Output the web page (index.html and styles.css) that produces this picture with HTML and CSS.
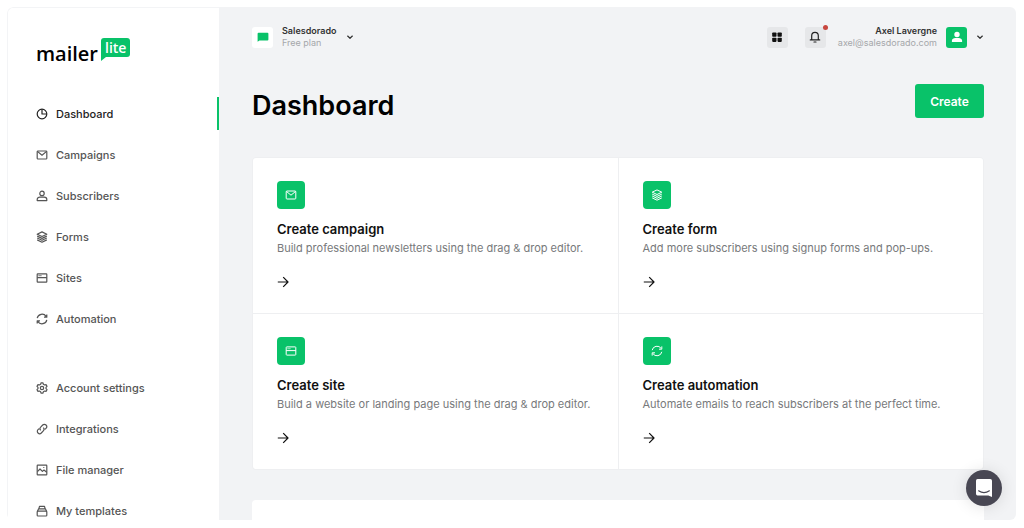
FILE: index.html
```html
<!DOCTYPE html>
<html lang="en">
<head>
<meta charset="utf-8">
<meta name="viewport" content="width=device-width, initial-scale=1">
<title>Dashboard | MailerLite</title>
<link rel="stylesheet" href="styles.css">
</head>
<body>
<svg class="sprite" aria-hidden="true">
  <symbol id="i-pie" viewBox="0 0 12 12"><circle cx="6" cy="6" r="4.8"/><path d="M6 1.2V6h4.8"/></symbol>
  <symbol id="i-mail" viewBox="0 0 12 12"><rect x="1.2" y="2" width="9.6" height="8" rx=".8"/><path d="M1.4 2.4 6 6.2l4.6-3.8"/></symbol>
  <symbol id="i-user" viewBox="0 0 12 12"><circle cx="6" cy="3.4" r="2.2"/><path d="M1.2 10.6V9.4C1.2 8 2.4 7.2 3.8 7.2h4.4c1.4 0 2.6.8 2.6 2.2v1.2z"/></symbol>
  <symbol id="i-layers" viewBox="0 0 12 12"><path d="M6 .9 10.8 3.2 6 5.5 1.2 3.2zM1.2 5.1 6 7.4l4.8-2.3M1.2 7 6 9.3 10.8 7M1.2 8.9 6 11.2l4.8-2.3"/></symbol>
  <symbol id="i-browser" viewBox="0 0 12 12"><rect x="1.2" y="1.9" width="9.6" height="8.2" rx=".6"/><path d="M1.2 5.6h9.6M2.6 3.7h1M4.4 3.7h1"/></symbol>
  <symbol id="i-sync" viewBox="0 0 12 12"><path d="M1.2 5.2A4.9 4.9 0 0 1 10.1 3.4M10.8 6.8A4.9 4.9 0 0 1 1.9 8.6M10.8 1.4v2.8H8M1.2 10.6V7.8H4"/></symbol>
  <symbol id="i-gear" viewBox="0 0 12 12"><path d="M5 .9h2l.4 1.4 1.2.7 1.4-.4 1 1.8-1 1v1.2l1 1-1 1.8-1.4-.4-1.2.7-.4 1.4H5l-.4-1.4-1.2-.7-1.4.4-1-1.8 1-1V5.4l-1-1 1-1.8 1.4.4 1.2-.7z"/><circle cx="6" cy="6" r="1.7"/></symbol>
  <symbol id="i-link" viewBox="0 0 12 12"><path d="M4.700 7.300a2.300 2.300 0 0 1 0-3.200l2-2.100a2.300 2.300 0 0 1 3.300 3.300L8.900 6.400M7.300 4.700a2.300 2.300 0 0 1 0 3.200l-2 2.100A2.300 2.300 0 0 1 2 6.700l1.100-1.100"/></symbol>
  <symbol id="i-image" viewBox="0 0 12 12"><rect x="1.2" y="1.2" width="9.6" height="9.6" rx=".6"/><path d="M1.4 7.600 4 5l2.400 2.400L8 6l2.700 2.200M7.300 3.500h1"/></symbol>
  <symbol id="i-stack" viewBox="0 0 12 12"><rect x="1.2" y="6.2" width="9.6" height="4.800" rx=".8"/><path d="M1.400 6.400 2.600 3.800h6.800l1.200 2.600M2.900 3.600l.6-2.200h5l.6 2.200"/></symbol>
  <symbol id="i-arrow" viewBox="0 0 12 12"><path d="M.8 6h10M6.200 1.200 11 6l-4.800 4.800"/></symbol>
  <symbol id="i-chevron" viewBox="0 0 8 8"><path d="m1.400 2.800 2.600 2.500 2.600-2.500"/></symbol>
</svg>

<div class="app">
  <aside class="sidebar">
    <a class="logo" href="#" aria-label="mailer lite">
      <span class="logo-name">mailer</span>
      <span class="logo-tag">lite</span>
    </a>
    <nav class="nav" aria-label="Main">
      <ul class="nav-group">
        <li><a class="nav-link active" href="#" aria-current="page"><svg class="icon"><use href="#i-pie"/></svg>Dashboard</a></li>
        <li><a class="nav-link" href="#"><svg class="icon"><use href="#i-mail"/></svg>Campaigns</a></li>
        <li><a class="nav-link" href="#"><svg class="icon"><use href="#i-user"/></svg>Subscribers</a></li>
        <li><a class="nav-link" href="#"><svg class="icon"><use href="#i-layers"/></svg>Forms</a></li>
        <li><a class="nav-link" href="#"><svg class="icon"><use href="#i-browser"/></svg>Sites</a></li>
        <li><a class="nav-link" href="#"><svg class="icon"><use href="#i-sync"/></svg>Automation</a></li>
      </ul>
      <ul class="nav-group">
        <li><a class="nav-link" href="#"><svg class="icon"><use href="#i-gear"/></svg>Account settings</a></li>
        <li><a class="nav-link" href="#"><svg class="icon"><use href="#i-link"/></svg>Integrations</a></li>
        <li><a class="nav-link" href="#"><svg class="icon"><use href="#i-image"/></svg>File manager</a></li>
        <li><a class="nav-link" href="#"><svg class="icon"><use href="#i-stack"/></svg>My templates</a></li>
      </ul>
    </nav>
  </aside>

  <main class="main">
    <header class="topbar">
      <button class="account" type="button">
        <span class="tile tile-white"><svg class="bubble" viewBox="0 0 12 10"><path fill="#09c269" d="M1.500.8h9q.9 0 .9.900v5.800q0 .9-.9.900H2.500L.6 9.800V1.700q0-.9.900-.9z"/></svg></span>
        <span class="who"><span class="who-name">Salesdorado</span><span class="who-sub">Free plan</span></span>
        <svg class="chevron"><use href="#i-chevron"/></svg>
      </button>
      <div class="tools">
        <div class="tiles">
          <button class="tile tile-grey" type="button" aria-label="Apps"><svg class="glyph" viewBox="0 0 12 12"><g fill="#111"><rect x="1.2" y="1.5" width="4.300" height="4.200" rx=".8"/><rect x="6.500" y="1.500" width="4.300" height="4.200" rx=".8"/><rect x="1.200" y="6.700" width="4.300" height="4.200" rx=".8"/><rect x="6.500" y="6.700" width="4.300" height="4.200" rx=".8"/></g></svg></button>
          <button class="tile tile-grey bell" type="button" aria-label="Notifications"><svg class="glyph" viewBox="0 0 12 12"><path fill="none" stroke="#222" stroke-width="1.200" stroke-linejoin="round" stroke-linecap="round" d="M2.700 8.600V4.700a3.300 3.300 0 0 1 6.600 0v3.900M1.300 8.900h9.400M5 11h2"/></svg><span class="dot"></span></button>
        </div>
        <button class="account" type="button">
          <span class="who who-right"><span class="who-name">Axel Lavergne</span><span class="who-sub">axel@salesdorado.com</span></span>
          <span class="tile tile-green"><svg class="glyph" viewBox="0 0 12 12"><path fill="#fff" d="M6 .8a2.700 2.700 0 0 1 2.700 2.700A2.700 2.700 0 0 1 6 6.200a2.700 2.700 0 0 1-2.700-2.700A2.700 2.700 0 0 1 6 .8zM.9 11V9.600C.9 7.900 2.700 7 4.200 7h3.600c1.500 0 3.300.9 3.300 2.600V11z"/></svg></span>
          <svg class="chevron"><use href="#i-chevron"/></svg>
        </button>
      </div>
    </header>

    <div class="heading">
      <h1>Dashboard</h1>
      <button class="create" type="button">Create</button>
    </div>

    <section class="cards" aria-label="Create">
      <a class="card" href="#">
        <span class="badge"><svg class="icon"><use href="#i-mail"/></svg></span>
        <h2>Create campaign</h2>
        <p>Build professional newsletters using the drag &amp; drop editor.</p>
        <svg class="icon arrow"><use href="#i-arrow"/></svg>
      </a>
      <a class="card" href="#">
        <span class="badge"><svg class="icon"><use href="#i-layers"/></svg></span>
        <h2>Create form</h2>
        <p>Add more subscribers using signup forms and pop-ups.</p>
        <svg class="icon arrow"><use href="#i-arrow"/></svg>
      </a>
      <a class="card" href="#">
        <span class="badge"><svg class="icon"><use href="#i-browser"/></svg></span>
        <h2>Create site</h2>
        <p>Build a website or landing page using the drag &amp; drop editor.</p>
        <svg class="icon arrow"><use href="#i-arrow"/></svg>
      </a>
      <a class="card" href="#">
        <span class="badge"><svg class="icon"><use href="#i-sync"/></svg></span>
        <h2>Create automation</h2>
        <p>Automate emails to reach subscribers at the perfect time.</p>
        <svg class="icon arrow"><use href="#i-arrow"/></svg>
      </a>
    </section>
    <section class="panel"></section>
  </main>
</div>

<button class="chat" type="button" aria-label="Open chat"><svg viewBox="0 0 18 20"><path fill="#fff" d="M2.500 1h12.800q1.700 0 1.700 1.700V19l-3.600-1.600H2.500Q1 17.400 1 15.800V2.700Q1 1 2.500 1z"/><path fill="none" stroke="#484753" stroke-width="1.100" stroke-linecap="round" d="M3.600 12.800q5.400 3.700 10.800 0"/></svg></button>
</body>
</html>
```
FILE: styles.css
```css
* { box-sizing: border-box; }

body {
  margin: 0;
  padding: 7px 8px 8px 7px;
  height: 100vh;
  overflow: hidden;
  background: #fff;
  color: #111;
  font-family: Inter, "Liberation Sans", sans-serif;
}

a { color: inherit; text-decoration: none; }
button { border: 0; padding: 0; background: none; color: inherit; font: inherit; cursor: pointer; }
h1, h2, p, ul { margin: 0; padding: 0; font-weight: 400; }
ul { list-style: none; }
svg { display: block; flex: none; }

.sprite { position: absolute; width: 0; height: 0; }

.app {
  display: grid;
  grid-template-columns: 212px 1fr;
  height: 100%;
  overflow: hidden;
  border-radius: 6px;
}

.icon, .chevron {
  width: 12px;
  height: 12px;
  fill: none;
  stroke: currentColor;
  stroke-width: 1.2;
  stroke-linejoin: round;
}

/* Sidebar */
.sidebar {
  padding-top: 30px;
  border: 1px solid #f3f4f6;
  border-width: 1px 0 0 1px;
  border-radius: 6px 0 0 0;
}

.logo {
  display: flex;
  gap: 3px;
  height: 28px;
  padding-left: 28px;
  font-family: "Open Sans", sans-serif;
  font-weight: 600;
}
.logo-name { font-size: 20px; line-height: 31px; color: #000; }
.logo-tag {
  position: relative;
  height: 19px;
  padding: 0 4px;
  border-radius: 3px 3px 3px 0;
  background: #09c269;
  color: #fff;
  font-size: 14px;
  line-height: 19px;
}
.logo-tag::after {
  content: "";
  position: absolute;
  left: 0;
  top: 100%;
  border: solid transparent;
  border-width: 4px 5px 0 0;
  border-top-color: #09c269;
}

.nav { display: grid; gap: 36px; padding-top: 31px; }
.nav-group { display: grid; gap: 8px; }
.nav-link {
  display: flex;
  align-items: center;
  gap: 8px;
  height: 33px;
  padding-left: 28px;
  border-right: 2px solid transparent;
  color: #555;
  font-size: 11px;
  font-weight: 500;
}
.nav-link.active { border-color: #09c269; color: #222; }

/* Main area */
.main { padding: 18px 32px 0 33px; background: #f2f3f5; overflow: hidden; }

.topbar { display: flex; justify-content: space-between; }
.account { display: flex; align-items: center; gap: 9px; text-align: left; }
.tools { display: flex; align-items: center; gap: 12px; }
.tiles { display: flex; gap: 17px; }
.who { display: grid; line-height: 12px; }
.who-right { text-align: right; }
.who-name { font-size: 9px; font-weight: 600; color: #333; }
.who-sub { font-size: 9px; color: #a5a7aa; }
.chevron { width: 8px; height: 8px; color: #333; }

.tile {
  display: grid;
  place-items: center;
  width: 21px;
  height: 21px;
  border-radius: 3px;
}
.tile-white { background: #fff; }
.tile-grey { background: #e6e7e9; }
.tile-green { background: #09c269; }
.bubble { width: 12px; height: 10px; }
.glyph { width: 12px; height: 12px; }
.bell { position: relative; }
.dot {
  position: absolute;
  top: -2px;
  right: -2px;
  width: 5px;
  height: 5px;
  border-radius: 50%;
  background: #c8473f;
}

.heading {
  display: flex;
  align-items: flex-start;
  justify-content: space-between;
  padding: 35px 0 34px;
}
h1 { padding-top: 5px; font-size: 27px; font-weight: 600; line-height: 34px; color: #000; }
.create {
  width: 69px;
  height: 34px;
  border-radius: 3px;
  background: #09c269;
  color: #fff;
  font-size: 12px;
  font-weight: 600;
}

.cards {
  display: grid;
  grid-template-columns: 1fr 1fr;
  gap: 1px;
  overflow: hidden;
  border: 1px solid #eeeff1;
  border-radius: 4px;
  background: #eeeff1;
}
.card {
  display: flex;
  flex-direction: column;
  align-items: flex-start;
  padding: 23px 24px 25px;
  background: #fff;
}
.badge {
  display: grid;
  place-items: center;
  width: 28px;
  height: 28px;
  border-radius: 4px;
  background: #09c269;
  color: #fff;
}
.badge .icon { stroke-width: 1; }
h2 { padding-top: 11px; font-size: 13px; font-weight: 600; line-height: 18px; }
p { padding-top: 2px; font-size: 11px; line-height: 17px; color: #77797b; }
.arrow { margin-top: 19px; }

.panel { height: 80px; margin-top: 30px; border-radius: 4px; background: #fff; }

/* Floating chat launcher */
.chat {
  position: fixed;
  right: 22px;
  bottom: 22px;
  display: grid;
  place-items: center;
  width: 36px;
  height: 36px;
  border-radius: 50%;
  background: #484753;
  box-shadow: 0 1px 16px rgba(0, 0, 0, 0.12);
}
.chat svg { width: 18px; height: 20px; }
```
